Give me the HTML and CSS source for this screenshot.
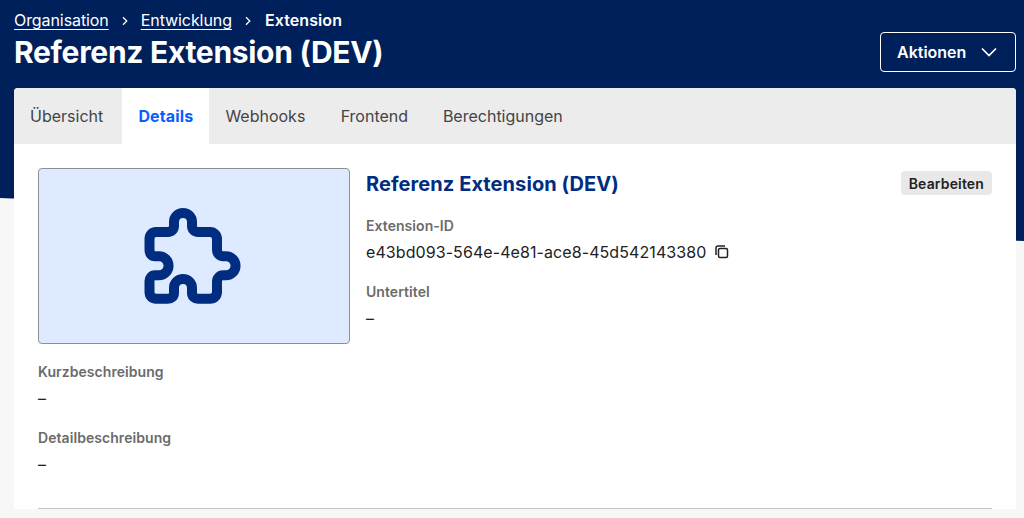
FILE: index.html
```html
<!DOCTYPE html>
<html lang="de">
<head>
  <meta charset="UTF-8">
  <meta name="viewport" content="width=device-width, initial-scale=1.0">
  <title>Referenz Extension (DEV)</title>
  <link rel="stylesheet" href="styles.css">
</head>
<body>
  <div class="hero-bg"></div>
  <div class="page">
    <div class="header">
      <div>
        <nav class="breadcrumb">
          <a href="#">Organisation</a>
          <svg class="crumb-icon" viewBox="0 0 10 10"><path d="M3 1.2 6.8 5 3 8.8"/></svg>
          <a href="#">Entwicklung</a>
          <svg class="crumb-icon" viewBox="0 0 10 10"><path d="M3 1.2 6.8 5 3 8.8"/></svg>
          <strong>Extension</strong>
        </nav>
        <h1>Referenz Extension (DEV)</h1>
      </div>
      <button class="actions" type="button">
        Aktionen
        <svg viewBox="0 0 18 10"><path d="M2 1.5 9 8.5 16 1.5"/></svg>
      </button>
    </div>

    <div class="card">
      <div class="tabs">
        <a href="#" class="tab" data-label="Übersicht">Übersicht</a>
        <a href="#" class="tab active" data-label="Details">Details</a>
        <a href="#" class="tab" data-label="Webhooks">Webhooks</a>
        <a href="#" class="tab" data-label="Frontend">Frontend</a>
        <a href="#" class="tab" data-label="Berechtigungen">Berechtigungen</a>
      </div>

      <div class="content">
        <div class="top">
          <div class="logo-box">
            <svg viewBox="16 18 96 96" class="puzzle">
              <path d="M26 42H38C41.5 42 44 39.5 44 36V32A9 9 0 0 1 62 32V36C62 39.5 64.5 42 68 42H80C84 42 87 45 87 49V60C87 63.5 89.5 66.2 93 66.2H96A9.55 9.55 0 0 1 96 85.3H93C89.5 85.3 87 88 87 91.5V102C87 106 84 108.8 80 108.8H68C64.5 108.8 62 106.5 62 103V98A9 9 0 0 0 44 98V103C44 106.5 41.5 108.8 38 108.8H26C22 108.8 19.5 106 19.5 102V91C19.5 88 21.5 85.3 25 85.3H29A9.55 9.55 0 0 0 29 66.2H25C21.5 66.2 19.5 63.5 19.5 60V49C19.5 45 22 42 26 42Z"/>
            </svg>
          </div>
          <div class="info">
            <div class="info-head">
              <h2>Referenz Extension (DEV)</h2>
              <button class="edit" type="button">Bearbeiten</button>
            </div>
            <div class="field">
              <div class="label">Extension-ID</div>
              <div class="value id">
                e43bd093-564e-4e81-ace8-45d542143380
                <svg class="copy" viewBox="0 0 14 14"><path d="M1 10V3C1 1.8 1.8 1 3 1H10"/><rect x="3.5" y="3.5" width="9" height="9" rx="1.5"/></svg>
              </div>
            </div>
            <div class="field">
              <div class="label">Untertitel</div>
              <div class="value">–</div>
            </div>
          </div>
        </div>

        <div class="field">
          <div class="label">Kurzbeschreibung</div>
          <div class="value">–</div>
        </div>
        <div class="field">
          <div class="label">Detailbeschreibung</div>
          <div class="value">–</div>
        </div>
        <hr>
      </div>
    </div>
  </div>
</body>
</html>
```

FILE: styles.css
```css
html, body {
  height: 100%;
}

body {
  margin: 0;
  overflow: hidden;
  position: relative;
  background-color: #f7f7f7;
  font-family: Inter, "Liberation Sans", sans-serif;
  color: #222;
}

/* navy band with the slanted lower edge */
.hero-bg {
  position: absolute;
  top: 0;
  left: 0;
  width: 100%;
  height: 241px;
  background-color: #00205b;
  clip-path: polygon(0 0, 100% 0, 100% 100%, 0 198px);
}

.page {
  position: relative;
  padding: 0 8px 0 14px;
}

.header {
  display: flex;
  justify-content: space-between;
  align-items: flex-start;
  height: 88px;
}

.breadcrumb {
  display: flex;
  align-items: center;
  padding-top: 11px;
  height: 19px;
  font-size: 16px;
  line-height: 19px;
  letter-spacing: -0.08px;
  color: #fff;
}

.breadcrumb a {
  color: #fff;
  text-decoration: underline;
  text-underline-offset: 3px;
  text-decoration-thickness: 1px;
}

.breadcrumb strong {
  margin-left: 1px;
  font-weight: 600;
  letter-spacing: 0.1px;
}

.crumb-icon {
  width: 10px;
  height: 10px;
  margin: 0 11px;
  fill: none;
  stroke: #fff;
  stroke-width: 1.3;
}

h1 {
  margin: 2px 0 0;
  font-size: 30px;
  line-height: 40px;
  font-weight: 700;
  letter-spacing: -0.3px;
  color: #fff;
}

.actions {
  display: flex;
  align-items: center;
  justify-content: space-between;
  box-sizing: border-box;
  width: 136px;
  height: 40px;
  margin-top: 32px;
  padding: 0 17px 0 16px;
  background: transparent;
  border: 1px solid #fff;
  border-radius: 4px;
  color: #fff;
  font-family: inherit;
  font-size: 16px;
  font-weight: 600;
}

.actions svg {
  width: 18px;
  height: 10px;
  fill: none;
  stroke: #fff;
  stroke-width: 1.7;
}

.card {
  background-color: #fff;
  border-radius: 4px 4px 0 0;
}

.tabs {
  display: flex;
  height: 56px;
  background-color: #ececec;
  border-radius: 4px 4px 0 0;
}

.tab {
  display: flex;
  flex-direction: column;
  justify-content: center;
  padding: 0 16px;
  font-size: 16px;
  color: #444;
  text-decoration: none;
}

/* keeps the tab as wide as its bold, selected state */
.tab::after {
  content: attr(data-label);
  height: 0;
  overflow: hidden;
  visibility: hidden;
  font-weight: 700;
}

.tab.active {
  background-color: #fff;
  color: #0b5cff;
  font-weight: 700;
  letter-spacing: 0.15px;
}

.content {
  padding: 24px 24px 0;
}

.top {
  display: flex;
  gap: 16px;
  margin-bottom: 14px;
}

.logo-box {
  display: flex;
  align-items: center;
  justify-content: center;
  box-sizing: border-box;
  flex: none;
  width: 312px;
  height: 176px;
  background-color: #deeaff;
  border: 1px solid #8a8f98;
  border-radius: 4px;
}

.puzzle {
  width: 96px;
  height: 96px;
  overflow: visible;
  fill: none;
  stroke: #002d80;
  stroke-width: 10;
}

.info {
  flex: 1;
}

.info-head {
  display: flex;
  justify-content: space-between;
  align-items: center;
  height: 30px;
  margin-bottom: 16px;
}

h2 {
  margin: 1px 0 0;
  font-size: 20px;
  line-height: 30px;
  font-weight: 700;
  letter-spacing: 0.08px;
  color: #002d80;
}

.edit {
  padding: 0 8px;
  height: 24px;
  background-color: #e8e8e8;
  border: none;
  border-radius: 4px;
  font-family: inherit;
  font-size: 14px;
  font-weight: 600;
  letter-spacing: 0.15px;
  color: #222;
}

.field {
  margin-bottom: 14px;
}

.label {
  font-size: 14px;
  line-height: 24px;
  font-weight: 600;
  letter-spacing: 0.06px;
  color: #6b6b6b;
}

.value {
  display: flex;
  align-items: center;
  font-size: 16px;
  line-height: 28px;
  color: #222;
}

.value.id {
  letter-spacing: 0.08px;
}

.copy {
  width: 14px;
  height: 14px;
  margin-left: 9px;
  fill: none;
  stroke: #222;
  stroke-width: 1.5;
}

hr {
  margin: 30px 0 0;
  border: none;
  border-top: 1px solid #c4c4c4;
}
```
